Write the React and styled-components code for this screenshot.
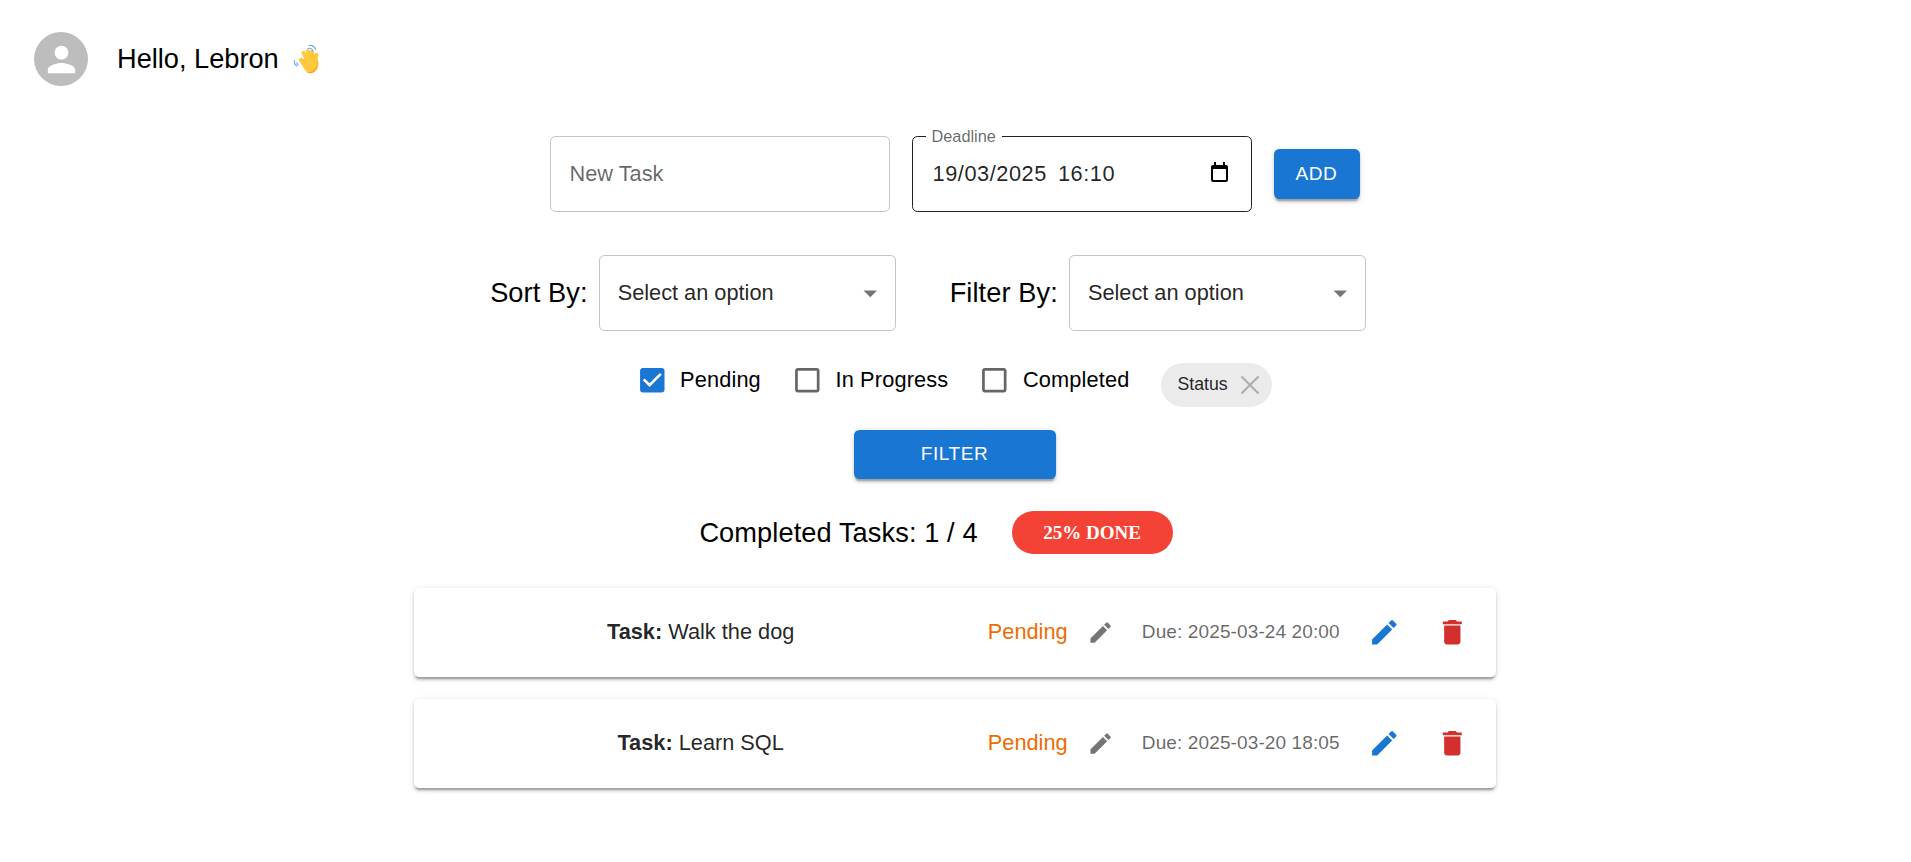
import React from "react";
import styled, { createGlobalStyle } from "styled-components";

const Global = createGlobalStyle`
  html, body { margin: 0; padding: 0; background: #fff; }
  body { font-family: "Liberation Sans", Arial, sans-serif; color: #000; }
`;

const Page = styled.div`
  min-height: 862px;
  box-sizing: border-box;
`;
const Header = styled.header`
  display: flex;
  align-items: center;
  gap: 29px;
  padding: 32px 34px 0;
`;
const Avatar = styled.div`
  width: 54px;
  height: 54px;
  border-radius: 50%;
  background: #bdbdbd;
  display: flex;
  align-items: center;
  justify-content: center;
  svg { width: 41px; height: 41px; fill: #fff; }
`;
const Greeting = styled.h1`
  margin: 0;
  font-size: 27.2px;
  font-weight: 400;
  line-height: 1.6;
  display: flex;
  align-items: center;
  gap: 11px;
`;
const Main = styled.main`
  display: flex;
  flex-direction: column;
  align-items: center;
  padding-top: 50px;
`;
const TaskForm = styled.div`
  display: flex;
  align-items: center;
  gap: 22px;
  padding-right: 2px;
`;
const Field = styled.div`
  position: relative;
  box-sizing: border-box;
  width: 340px;
  height: 76px;
  padding: 0 19px;
  display: flex;
  align-items: center;
  justify-content: space-between;
  border-radius: 5.44px;
  border: 1px solid ${(p) => (p.$active ? "rgba(0,0,0,0.87)" : "rgba(0,0,0,0.23)")};
  font-size: 21.76px;
  color: ${(p) => (p.$active ? "rgba(0,0,0,0.87)" : "rgba(0,0,0,0.6)")};
`;
const FloatingLabel = styled.span`
  position: absolute;
  left: 13px;
  top: -10px;
  padding: 0 6px;
  background: #fff;
  font-size: 16.32px;
  line-height: 19px;
  color: rgba(0,0,0,0.6);
`;
const DateValue = styled.span`
  margin-left: 1px;
  letter-spacing: 0.55px;
  word-spacing: 4.5px;
`;
const CalendarIcon = styled.svg`
  width: 17px;
  height: 20px;
  margin: 0 4px 4px 0;
  fill: #000;
`;
const Button = styled.button`
  box-sizing: border-box;
  height: 49.6px;
  width: ${(p) => p.$width}px;
  border: 0;
  border-radius: 5.44px;
  background: #1976d2;
  color: #fff;
  font-family: inherit;
  font-size: 19.04px;
  letter-spacing: 0.54px;
  text-transform: uppercase;
  box-shadow: 0 4px 1.4px -2.7px rgba(0,0,0,0.2), 0 2.7px 2.7px 0 rgba(0,0,0,0.14), 0 1.4px 6.8px 0 rgba(0,0,0,0.12);
`;
const SortRow = styled.div`
  display: flex;
  align-items: center;
  gap: 54px;
  margin-top: 43px;
  padding-right: 55px;
`;
const SortGroup = styled.div`
  display: flex;
  align-items: center;
  gap: 11px;
`;
const SortLabel = styled.span`
  font-size: 27.2px;
  line-height: 1.6;
  letter-spacing: 0.1px;
`;
const Select = styled.div`
  box-sizing: border-box;
  width: 297px;
  height: 76px;
  padding: 0 8.5px 0 18px;
  display: flex;
  align-items: center;
  justify-content: space-between;
  border: 1px solid rgba(0,0,0,0.23);
  border-radius: 5.44px;
  font-size: 21.76px;
  color: rgba(0,0,0,0.87);
  svg { width: 32.6px; height: 32.6px; fill: rgba(0,0,0,0.54); }
`;
const CheckRow = styled.div`
  display: flex;
  align-items: center;
  margin-top: 21px;
  padding-right: 15px;
`;
const CheckItem = styled.label`
  display: flex;
  align-items: center;
  margin-right: 18px;
  font-size: 21.76px;
  line-height: 1.5;
  letter-spacing: 0.15px;
  svg {
    width: 32.6px;
    height: 32.6px;
    margin: 12px ${(p) => (p.$checked ? 11 : 12)}px 12px 12px;
    fill: ${(p) => (p.$checked ? "#1976d2" : "rgba(0,0,0,0.6)")};
  }
`;
const Chip = styled.div`
  display: flex;
  align-items: center;
  box-sizing: border-box;
  height: 43.5px;
  margin: 9px 0 0 14px;
  padding: 0 6.5px 0 16px;
  border-radius: 22px;
  background: rgba(0,0,0,0.08);
  font-size: 17.68px;
  color: rgba(0,0,0,0.87);
  svg { width: 30px; height: 30px; margin-left: 7.5px; stroke: rgba(0,0,0,0.26); stroke-width: 2.2; fill: none; }
`;
const FilterWrap = styled.div`
  margin-top: 21px;
  padding-right: 2px;
`;
const Progress = styled.div`
  display: flex;
  align-items: center;
  gap: 34px;
  margin-top: 32px;
  padding-right: 39px;
`;
const ProgressText = styled.span`
  font-size: 27.2px;
  line-height: 1.6;
  letter-spacing: 0.1px;
`;
const Badge = styled.div`
  box-sizing: border-box;
  width: 161px;
  height: 43px;
  border-radius: 22px;
  background: #f44336;
  color: #fff;
  display: flex;
  align-items: center;
  justify-content: center;
  font-family: "Liberation Serif", "Times New Roman", serif;
  font-weight: 700;
  font-size: 19.04px;
`;
const TaskList = styled.div`
  width: 1082px;
  margin: 33px 2px 0 0;
  display: flex;
  flex-direction: column;
  gap: 22px;
`;
const Card = styled.div`
  box-sizing: border-box;
  height: 89px;
  padding: 0 16px 0 22px;
  display: flex;
  align-items: center;
  border-radius: 5.44px;
  background: #fff;
  box-shadow: 0 4px 1.4px -2.7px rgba(0,0,0,0.2), 0 2.7px 2.7px 0 rgba(0,0,0,0.14), 0 1.4px 6.8px 0 rgba(0,0,0,0.12);
`;
const TaskName = styled.div`
  flex: 1;
  text-align: center;
  font-size: 21.76px;
  color: rgba(0,0,0,0.87);
`;
const StatusText = styled.span`
  margin-left: 22px;
  font-size: 21.76px;
  color: #ed6c02;
`;
const StatusEdit = styled.svg`
  width: 27.2px;
  height: 27.2px;
  margin-left: 19px;
  fill: rgba(0,0,0,0.54);
`;
const Due = styled.span`
  margin-left: 28px;
  font-size: 19.04px;
  letter-spacing: 0.1px;
  color: rgba(0,0,0,0.6);
`;
const IconBtn = styled.span`
  display: flex;
  align-items: center;
  justify-content: center;
  width: 54.4px;
  height: 54.4px;
  margin-left: ${(p) => p.$gap}px;
  svg { width: 32.6px; height: 32.6px; fill: ${(p) => p.$color}; }
`;

const Icon = ({ d }) => <svg viewBox="0 0 24 24"><path d={d} /></svg>;
const EDIT = "M3 17.25V21h3.75L17.81 9.94l-3.75-3.75L3 17.25zM20.71 7.04c.39-.39.39-1.02 0-1.41l-2.34-2.34a.9959.9959 0 0 0-1.41 0l-1.83 1.83 3.75 3.75 1.83-1.83z";
const TRASH = "M6 19c0 1.1.9 2 2 2h8c1.1 0 2-.9 2-2V7H6v12zM19 4h-3.5l-1-1h-5l-1 1H5v2h14V4z";
const CHECKED = "M19 3H5c-1.11 0-2 .9-2 2v14c0 1.1.89 2 2 2h14c1.11 0 2-.9 2-2V5c0-1.1-.89-2-2-2zm-9 14l-5-5 1.41-1.41L10 14.17l7.59-7.59L19 8l-9 9z";
const UNCHECKED = "M19 5v14H5V5h14m0-2H5c-1.1 0-2 .9-2 2v14c0 1.1.9 2 2 2h14c1.1 0 2-.9 2-2V5c0-1.1-.9-2-2-2z";
const ARROW = "M7 10l5 5 5-5z";

const Wave = () => (
  <svg width="30" height="34" viewBox="10 2 30 34">
    <g fill="none" strokeLinecap="round">
      <g stroke="#ffc83d" strokeWidth="4.2">
        <path d="M29 22L23.500 13" />
        <path d="M31 21L27.800 11.500" />
        <path d="M33 21L32 12" />
        <path d="M34 22L36.500 15" />
        <path d="M26 27L21 20" />
      </g>
      <g stroke="#6aa5f2" strokeWidth="1.100">
        <path d="M28 8.500C30 8 32 8.800 32.800 11" />
        <path d="M29 5.500C32 5 34.500 6.500 35.500 9.500" />
        <path d="M14.500 20.500C14 23 15 25 17 26" />
        <path d="M17 22.500C16.800 23.600 17.300 24.400 18.200 24.800" />
      </g>
    </g>
    <path d="M22 21C23 16 36 15 38 19C39.500 25 37.500 33 30 33C25 33 22.500 26 22 21Z" fill="#ffc83d" />
    <path d="M26.500 32C32 33 37 29 38 21C38.500 28 35 33.500 30 33.300C28.500 33.300 27.500 32.800 26.500 32Z" fill="#f7a823" />
  </svg>
);

const tasks = [
  { name: "Walk the dog", due: "2025-03-24 20:00" },
  { name: "Learn SQL", due: "2025-03-20 18:05" },
];

export default function App() {
  return (
    <Page>
      <Global />
      <Header>
        <Avatar>
          <svg viewBox="0 0 24 24"><path d="M12 12c2.210 0 4-1.790 4-4s-1.790-4-4-4-4 1.790-4 4 1.790 4 4 4zm0 2c-2.670 0-8 1.340-8 4v2h16v-2c0-2.660-5.330-4-8-4z" /></svg>
        </Avatar>
        <Greeting>Hello, Lebron <Wave /></Greeting>
      </Header>
      <Main>
        <TaskForm>
          <Field>New Task</Field>
          <Field $active>
            <FloatingLabel>Deadline</FloatingLabel>
            <DateValue>19/03/2025 16:10</DateValue>
            <CalendarIcon viewBox="0 0 17 20"><path fillRule="evenodd" d="M3 0h2v3h7V0h2v3h1a2 2 0 0 1 2 2v13a2 2 0 0 1-2 2H2a2 2 0 0 1-2-2V5a2 2 0 0 1 2-2h1zM2 7v11h13V7z" /></CalendarIcon>
          </Field>
          <Button $width={86}>Add</Button>
        </TaskForm>
        <SortRow>
          <SortGroup>
            <SortLabel>Sort By:</SortLabel>
            <Select>Select an option<Icon d={ARROW} /></Select>
          </SortGroup>
          <SortGroup>
            <SortLabel>Filter By:</SortLabel>
            <Select>Select an option<Icon d={ARROW} /></Select>
          </SortGroup>
        </SortRow>
        <CheckRow>
          <CheckItem $checked><Icon d={CHECKED} />Pending</CheckItem>
          <CheckItem><Icon d={UNCHECKED} />In Progress</CheckItem>
          <CheckItem><Icon d={UNCHECKED} />Completed</CheckItem>
          <Chip>Status<svg viewBox="0 0 30 30"><path d="M6.500 6.500l17 17M23.500 6.500l-17 17" /></svg></Chip>
        </CheckRow>
        <FilterWrap><Button $width={202}>Filter</Button></FilterWrap>
        <Progress>
          <ProgressText>Completed Tasks: 1 / 4</ProgressText>
          <Badge>25% DONE</Badge>
        </Progress>
        <TaskList>
          {tasks.map((t) => (
            <Card key={t.name}>
              <TaskName><b>Task:</b> {t.name}</TaskName>
              <StatusText>Pending</StatusText>
              <StatusEdit viewBox="0 0 24 24"><path d={EDIT} /></StatusEdit>
              <Due>Due: {t.due}</Due>
              <IconBtn $gap={17} $color="#1976d2"><Icon d={EDIT} /></IconBtn>
              <IconBtn $gap={14} $color="#d32f2f"><Icon d={TRASH} /></IconBtn>
            </Card>
          ))}
        </TaskList>
      </Main>
    </Page>
  );
}
